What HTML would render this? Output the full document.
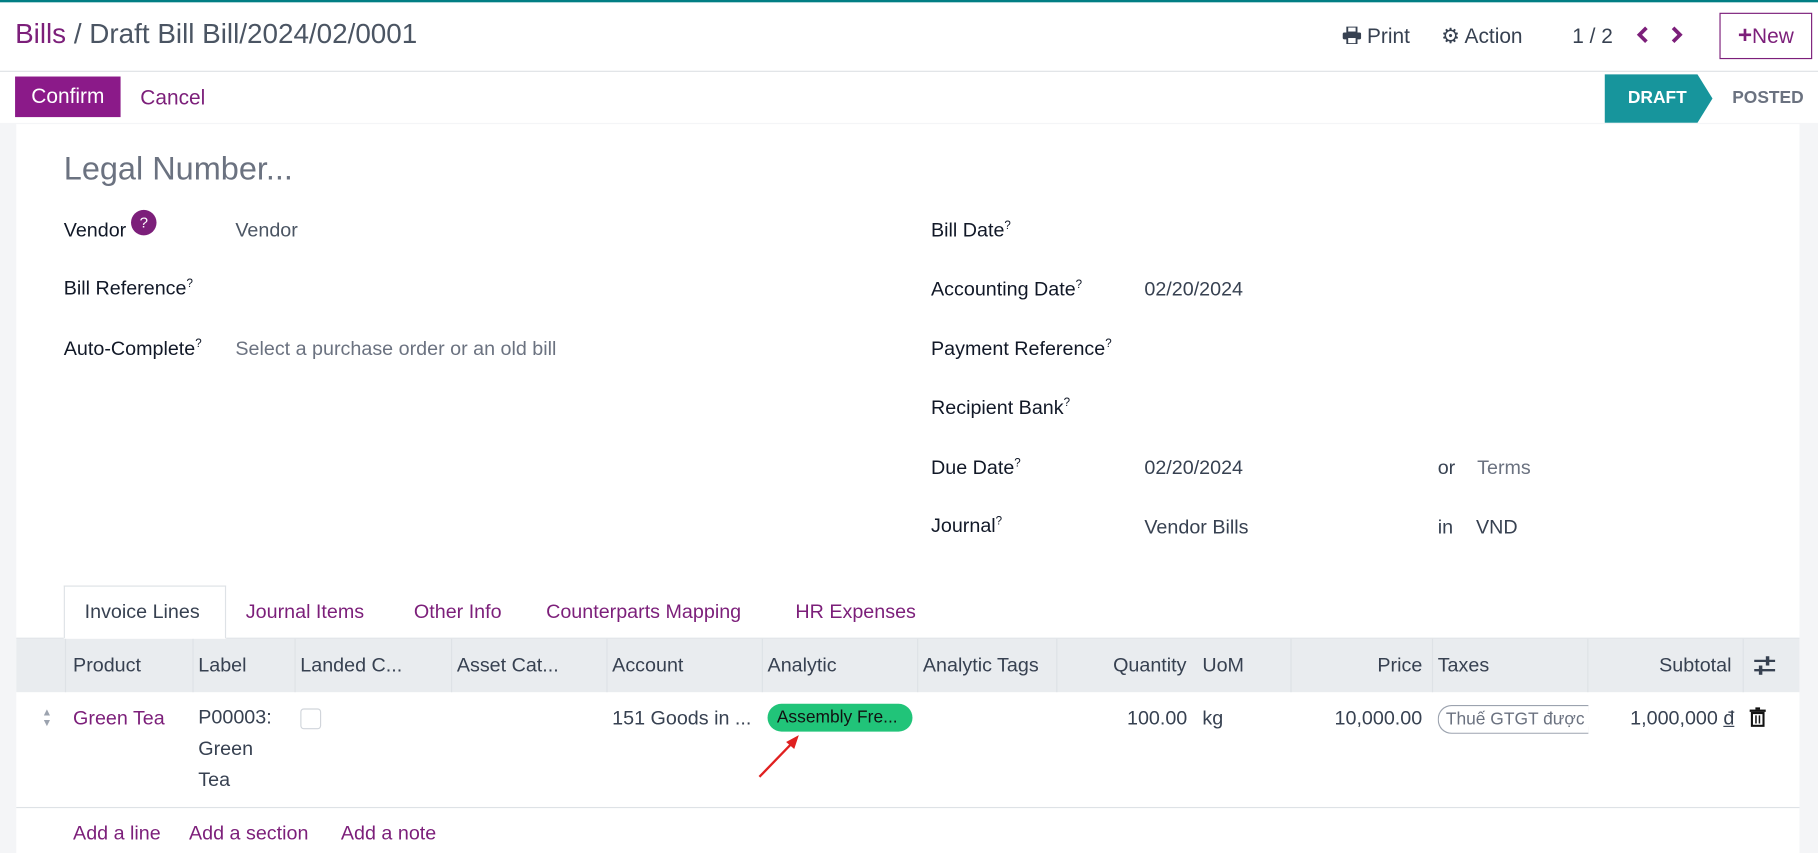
<!DOCTYPE html>
<html><head><meta charset="utf-8">
<style>
html,body{margin:0;padding:0;width:1818px;height:853px;overflow:hidden;background:#fff}
#w{position:absolute;left:0;top:0;width:1568px;height:736px;transform:scale(1.15944);transform-origin:0 0;font-family:"Liberation Sans","Noto Sans CJK SC",sans-serif;color:#374151;font-size:17px}
.a{position:absolute;white-space:nowrap}
.pu{color:#7c1f7a}
.lbl{color:#111827}
sup{font-size:10px;line-height:0}
.th{position:absolute;top:564px;font-size:17px;color:#374151}
.vl{position:absolute;top:551px;height:46px;border-left:1px solid #dee2e6}
</style></head><body><div id="w">
<div class="a" style="left:0;top:0;width:1568px;height:2px;background:#017e84"></div>
<div class="a" style="left:13px;top:16px;font-size:24px"><span class="pu">Bills</span> <span style="color:#4b5563">/ Draft Bill Bill/2024/02/0001</span></div>
<div class="a" style="left:1158px;top:21px;font-size:18px;color:#374151"><svg width="16" height="15" viewBox="0 0 16 15" style="vertical-align:-1px"><rect x="4" y="0" width="8" height="5" fill="none" stroke="#374151" stroke-width="1.6"/><rect x="0" y="5" width="16" height="6" rx="1.5" fill="#374151"/><rect x="4" y="9" width="8" height="6" fill="#fff" stroke="#374151" stroke-width="1.6"/></svg> Print</div>
<div class="a" style="left:1243px;top:21px;font-size:18px">&#9881; Action</div>
<div class="a" style="left:1356px;top:21px;font-size:18px">1 / 2</div>
<svg class="a" style="left:1411px;top:22px" width="12" height="16"><polyline points="9,2 3,8 9,14" fill="none" stroke="#7c1f7a" stroke-width="3.2"/></svg>
<svg class="a" style="left:1440px;top:22px" width="12" height="16"><polyline points="3,2 9,8 3,14" fill="none" stroke="#7c1f7a" stroke-width="3.2"/></svg>
<div class="a" style="left:1483px;top:11px;width:80px;height:40px;border:1px solid #7c1f7a;box-sizing:border-box;font-size:18px;line-height:38px;text-align:center;color:#7c1f7a"><b style="font-size:21px">+</b>New</div>
<div class="a" style="left:0;top:61px;width:1568px;border-top:1px solid #dee2e6"></div>
<div class="a" style="left:13px;top:66px;width:91px;height:35px;background:#8b1a89;color:#fff;font-size:18px;line-height:35px;text-align:center">Confirm</div>
<div class="a pu" style="left:121px;top:74px;font-size:18px">Cancel</div>
<svg class="a" style="left:1384px;top:64px" width="94" height="42"><polygon points="0,0 80,0 93,21 80,42 0,42" fill="#17959c"/></svg>
<div class="a" style="left:1404px;top:76px;color:#fff;font-weight:bold;font-size:15px">DRAFT</div>
<div class="a" style="left:1494px;top:76px;color:#6b7280;font-weight:bold;font-size:15px">POSTED</div>
<div class="a" style="left:0;top:106px;width:1568px;height:630px;background:#f4f5f7"></div>
<div class="a" style="left:14px;top:107px;width:1538px;height:629px;background:#fff"></div>
<div class="a" style="left:55px;top:130px;font-size:28px;color:#6b7280">Legal Number...</div>
<div class="a lbl" style="left:55px;top:189px">Vendor</div>
<div class="a" style="left:113px;top:181px;width:22px;height:22px;border-radius:50%;background:#7c1f7a;color:#fff;font-size:13px;text-align:center;line-height:22px">?</div>
<div class="a" style="left:203px;top:189px;color:#4b5563">Vendor</div>
<div class="a lbl" style="left:55px;top:239px">Bill Reference<sup>?</sup></div>
<div class="a lbl" style="left:55px;top:291px">Auto-Complete<sup>?</sup></div>
<div class="a" style="left:203px;top:291px;color:#6b7280">Select a purchase order or an old bill</div>
<div class="a lbl" style="left:803px;top:189px">Bill Date<sup>?</sup></div>
<div class="a lbl" style="left:803px;top:240px">Accounting Date<sup>?</sup></div>
<div class="a" style="left:987px;top:240px">02/20/2024</div>
<div class="a lbl" style="left:803px;top:291px">Payment Reference<sup>?</sup></div>
<div class="a lbl" style="left:803px;top:342px">Recipient Bank<sup>?</sup></div>
<div class="a lbl" style="left:803px;top:394px">Due Date<sup>?</sup></div>
<div class="a" style="left:987px;top:394px">02/20/2024</div>
<div class="a" style="left:1240px;top:394px">or</div>
<div class="a" style="left:1274px;top:394px;color:#6b7280">Terms</div>
<div class="a lbl" style="left:803px;top:444px">Journal<sup>?</sup></div>
<div class="a" style="left:987px;top:445px">Vendor Bills</div>
<div class="a" style="left:1240px;top:445px">in</div>
<div class="a" style="left:1273px;top:445px">VND</div>
<div class="a" style="left:14px;top:550px;width:1538px;border-top:1px solid #dee2e6"></div>
<div class="a" style="left:55px;top:505px;width:140px;height:46px;border:1px solid #dee2e6;border-bottom:1px solid #fff;box-sizing:border-box;background:#fff"></div>
<div class="a" style="left:73px;top:518px">Invoice Lines</div>
<div class="a pu" style="left:212px;top:518px">Journal Items</div>
<div class="a pu" style="left:357px;top:518px">Other Info</div>
<div class="a pu" style="left:471px;top:518px">Counterparts Mapping</div>
<div class="a pu" style="left:686px;top:518px">HR Expenses</div>
<div class="a" style="left:14px;top:551px;width:1538px;height:46px;background:#e9ecef"></div>
<div class="vl" style="left:56px"></div><div class="vl" style="left:166px"></div><div class="vl" style="left:254px"></div><div class="vl" style="left:389px"></div><div class="vl" style="left:523px"></div><div class="vl" style="left:657px"></div><div class="vl" style="left:791px"></div><div class="vl" style="left:911px"></div><div class="vl" style="left:1113px"></div><div class="vl" style="left:1235px"></div><div class="vl" style="left:1369px"></div><div class="vl" style="left:1503px"></div>
<div class="th" style="left:63px">Product</div>
<div class="th" style="left:171px">Label</div>
<div class="th" style="left:259px">Landed C...</div>
<div class="th" style="left:394px">Asset Cat...</div>
<div class="th" style="left:528px">Account</div>
<div class="th" style="left:662px">Analytic</div>
<div class="th" style="left:796px">Analytic Tags</div>
<div class="th" style="left:960px">Quantity</div>
<div class="th" style="left:1037px">UoM</div>
<div class="th" style="left:1188px">Price</div>
<div class="th" style="left:1240px">Taxes</div>
<div class="th" style="left:1431px">Subtotal</div>
<svg class="a" style="left:1512px;top:565px" width="20" height="18"><line x1="1" y1="5" x2="19" y2="5" stroke="#374151" stroke-width="2"/><line x1="1" y1="13" x2="19" y2="13" stroke="#374151" stroke-width="2"/><rect x="11" y="1" width="3" height="8" fill="#374151"/><rect x="5" y="9" width="3" height="8" fill="#374151"/></svg>
<div class="a" style="left:36px;top:610px;font-size:9px;color:#9ca3af;line-height:9px">&#9650;<br>&#9660;</div>
<div class="a pu" style="left:63px;top:610px">Green Tea</div>
<div class="a" style="left:171px;top:605px;line-height:27px">P00003:<br>Green<br>Tea</div>
<div class="a" style="left:259px;top:611px;width:16px;height:16px;border:1px solid #d1d5db;border-radius:3px"></div>
<div class="a" style="left:528px;top:610px">151 Goods in ...</div>
<div class="a" style="left:662px;top:607px;width:125px;height:24px;border-radius:12px;background:#21c479;color:#111;font-size:15px;line-height:24px;padding-left:8px;box-sizing:border-box;overflow:hidden">Assembly Fre...</div>
<svg class="a" style="left:650px;top:632px" width="44" height="42"><line x1="5" y1="38" x2="36" y2="6" stroke="#e02020" stroke-width="2"/><polygon points="39,2 28,8 35,14" fill="#e02020"/></svg>
<div class="a" style="left:972px;top:610px">100.00</div>
<div class="a" style="left:1037px;top:610px">kg</div>
<div class="a" style="left:1151px;top:610px">10,000.00</div>
<div class="a" style="left:1240px;top:608px;width:130px;height:25px;border:1px solid #9ca3af;border-right:none;border-radius:12px 0 0 12px;box-sizing:border-box;font-size:15px;line-height:23px;padding-left:6px;overflow:hidden;color:#6b7280">Thuế GTGT được khấu</div>
<div class="a" style="left:1406px;top:610px">1,000,000 <u>đ</u></div>
<svg class="a" style="left:1509px;top:610px" width="14" height="17"><rect x="0" y="2" width="14" height="2" fill="#111"/><rect x="5" y="0" width="4" height="2" fill="#111"/><rect x="2" y="5" width="10" height="11" fill="none" stroke="#111" stroke-width="1.8"/><line x1="5.5" y1="7" x2="5.5" y2="14" stroke="#111" stroke-width="1.3"/><line x1="8.5" y1="7" x2="8.5" y2="14" stroke="#111" stroke-width="1.3"/></svg>
<div class="a" style="left:14px;top:696px;width:1538px;border-top:1px solid #dee2e6"></div>
<div class="a pu" style="left:63px;top:709px">Add a line</div>
<div class="a pu" style="left:163px;top:709px">Add a section</div>
<div class="a pu" style="left:294px;top:709px">Add a note</div>
</div></body></html>
